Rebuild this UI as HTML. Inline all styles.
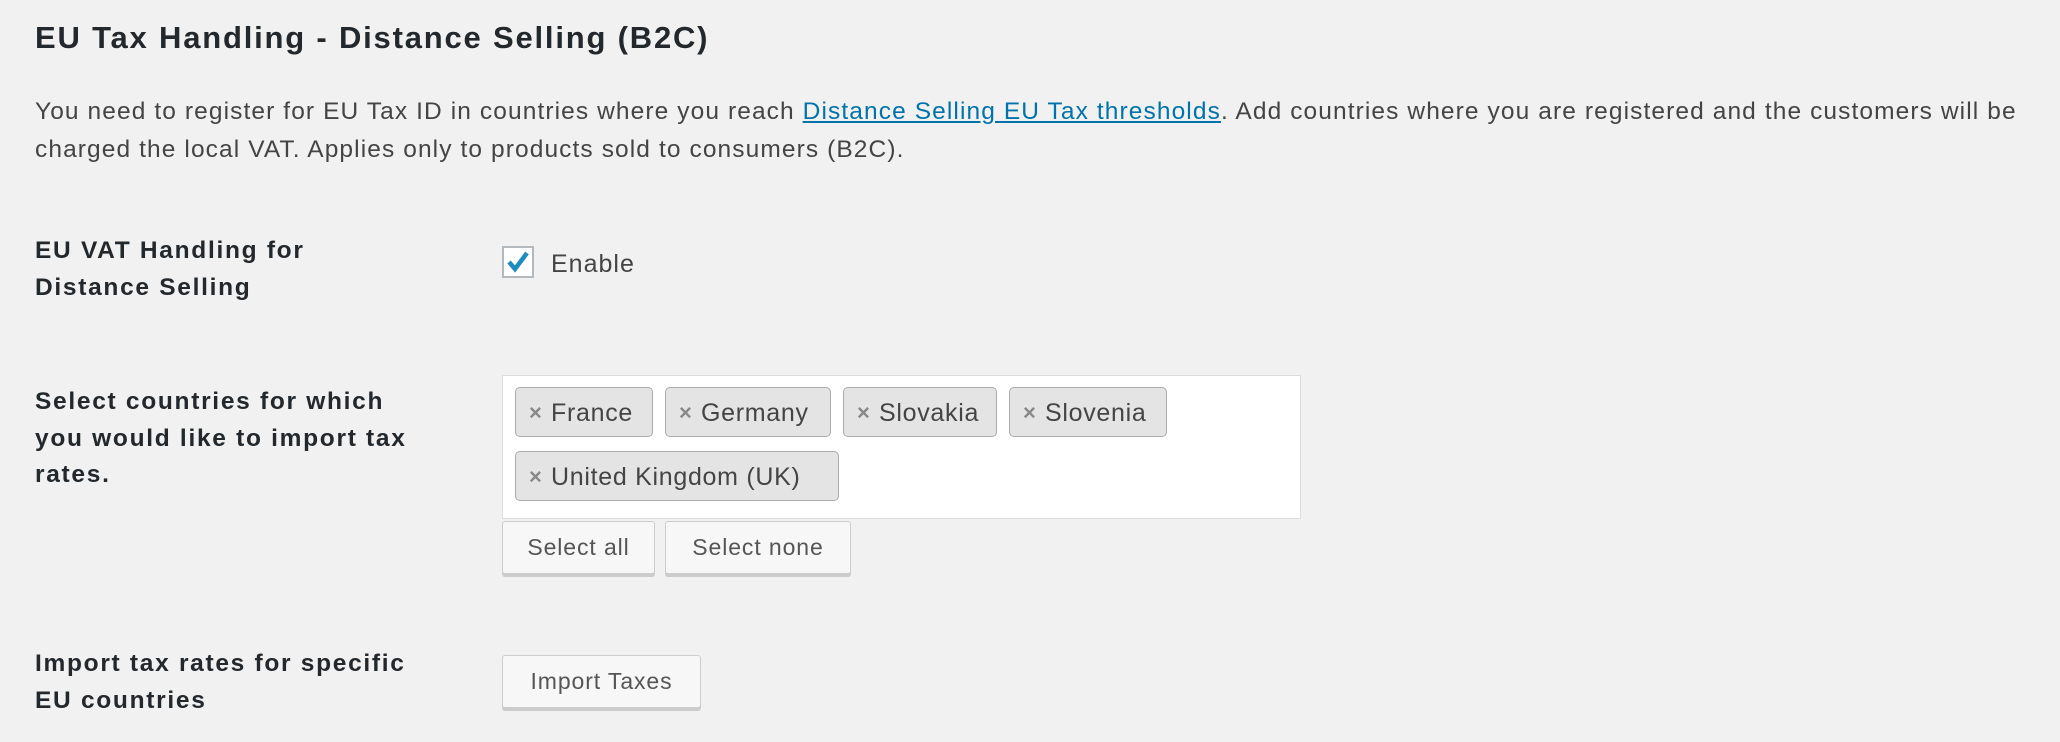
<!DOCTYPE html>
<html><head><meta charset="utf-8"><style>
body{margin:0;width:2060px;height:742px;background:#f1f1f1;font-family:"Liberation Sans",sans-serif;color:#23282d;position:relative;overflow:hidden}
.a{position:absolute;white-space:nowrap}
h1{position:absolute;left:35px;top:18px;margin:0;font-size:31px;font-weight:bold;line-height:40px;letter-spacing:1.8px}
.p{left:35px;top:93px;font-size:24.5px;line-height:38px;color:#444;white-space:normal;width:2020px;letter-spacing:1.1px}
.p a{color:#0073aa;text-decoration:underline}
.lb{font-size:24.5px;font-weight:bold;line-height:36.5px;left:35px;letter-spacing:1.7px}
.cb{left:502px;top:246px;width:28px;height:28px;border:2px solid #b4b9be;background:#fff}
.box{left:502px;top:375px;width:797px;height:142px;background:#fff;border:1px solid #ddd}
.tag{position:absolute;height:50px;border:1px solid #aaa;border-radius:5px;background:#e4e4e4;font-size:25px;line-height:50px;color:#444;box-sizing:border-box;padding-left:35px;letter-spacing:0.7px}
.tag:before{content:"×";position:absolute;left:13px;top:0;color:#888;font-size:22px;font-weight:bold}
.btn{position:absolute;box-sizing:border-box;border:1px solid #ccc;border-radius:3px;background:#f7f7f7;box-shadow:0 3px 0 #ccc;font-size:23px;color:#555;text-align:center;height:53px;line-height:51px;letter-spacing:0.9px}
</style></head><body>
<h1>EU Tax Handling - Distance Selling (B2C)</h1>
<div class="a p">You need to register for EU Tax ID in countries where you reach <a>Distance Selling EU Tax thresholds</a>. Add countries where you are registered and the customers will be charged the local VAT. Applies only to products sold to consumers (B2C).</div>
<div class="a lb" style="top:233px">EU VAT Handling for<br>Distance Selling</div>
<div class="a cb"><svg width="28" height="28" viewBox="0 0 28 28"><path d="M5 14 L11 21 L23 5" fill="none" stroke="#1e8cbe" stroke-width="4.5"/></svg></div>
<div class="a" style="left:551px;top:247px;font-size:25px;line-height:34px;color:#444;letter-spacing:1px">Enable</div>
<div class="a lb" style="top:384px">Select countries for which<br>you would like to import tax<br>rates.</div>
<div class="a box"></div>
<div class="tag" style="left:515px;top:387px;width:138px">France</div>
<div class="tag" style="left:665px;top:387px;width:166px">Germany</div>
<div class="tag" style="left:843px;top:387px;width:154px">Slovakia</div>
<div class="tag" style="left:1009px;top:387px;width:158px">Slovenia</div>
<div class="tag" style="left:515px;top:451px;width:324px">United Kingdom (UK)</div>
<div class="btn" style="left:502px;top:521px;width:153px">Select all</div>
<div class="btn" style="left:665px;top:521px;width:186px">Select none</div>
<div class="a lb" style="top:646px">Import tax rates for specific<br>EU countries</div>
<div class="btn" style="left:502px;top:655px;width:199px">Import Taxes</div>
</body></html>
